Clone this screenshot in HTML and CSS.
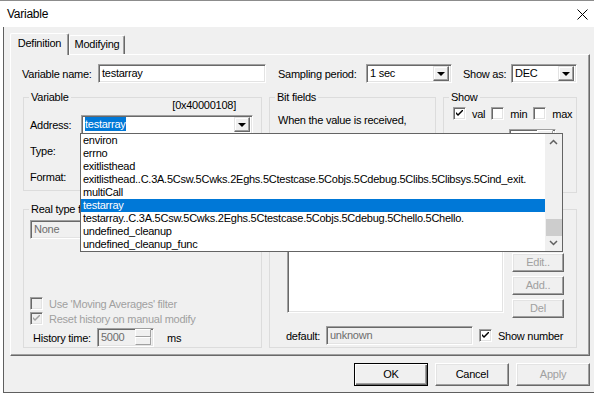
FILE: index.html
```html
<!DOCTYPE html>
<html lang="en">

<head>
    <meta charset="UTF-8">
    <meta name="viewport" content="width=device-width, initial-scale=1.0">
    <title>Variable</title>
    <link rel="stylesheet" href="styles.css">
</head>

<body>
    <div class="window">
        <div class="titlebar">
            <span class="titlebar__text">Variable</span>
            <svg class="titlebar__close" width="11" height="11" viewBox="0 0 11 11">
                <path d="M0.5 0.5 L10.5 10.5 M10.5 0.5 L0.5 10.5" stroke="#000" stroke-width="1" fill="none" />
            </svg>
        </div>
        <div class="client">
            <div class="tabs">
                <div class="tab tab--active">Definition</div>
                <div class="tab">Modifying</div>
            </div>
            <div class="panel">
                <div class="row">
                    <span class="lbl lbl--name">Variable name:</span>
                    <div class="edit edit--name">testarray</div>
                    <span class="lbl lbl--period">Sampling period:</span>
                    <div class="combo combo--period"><span class="combo__text">1 sec</span><span class="combo__btn"></span></div>
                    <span class="lbl lbl--showas">Show as:</span>
                    <div class="combo combo--showas"><span class="combo__text">DEC</span><span class="combo__btn"></span></div>
                </div>
                <div class="groups">
                    <div class="col col--left">
                        <fieldset class="group group--variable">
                            <legend>Variable</legend>
                            <div class="hex">[0x40000108]</div>
                            <div class="field">
                                <span class="field__lbl">Address:</span>
                                <div class="combo combo--addr"><span class="combo__text"><span class="sel">testarray</span></span><span class="combo__btn"></span></div>
                            </div>
                            <div class="field field--type">
                                <span class="field__lbl">Type:</span>
                                <div class="combo combo--addr"><span class="combo__text"></span><span class="combo__btn"></span></div>
                            </div>
                            <div class="field field--format">
                                <span class="field__lbl">Format:</span>
                                <div class="combo combo--addr"><span class="combo__text"></span><span class="combo__btn"></span></div>
                            </div>
                        </fieldset>
                        <fieldset class="group group--real">
                            <legend><span class="legend__clip">Real type filter</span></legend>
                            <div class="combo combo--none combo--off"><span class="combo__text">None</span><span class="combo__btn"></span></div>
                            <div class="check check--off check--first"><span class="check__box"></span>Use 'Moving Averages' filter</div>
                            <div class="check check--off"><span class="check__box"><svg width="7" height="7" viewBox="0 0 7 7"><path d="M0 2 L0 4 L2 6 L7 1 L7 -1 L2 4 Z" fill="#a0a0a0" /></svg></span>Reset history on manual modify</div>
                            <div class="history">
                                <span class="history__lbl">History time:</span>
                                <div class="spin spin--off"><span class="spin__text">5000</span><span class="spin__btns"><span class="spin__up"></span><span class="spin__down"></span></span></div>
                                <span class="history__unit">ms</span>
                            </div>
                        </fieldset>
                    </div>
                    <div class="col col--right">
                        <div class="top-groups">
                            <fieldset class="group group--bits">
                                <legend>Bit fields</legend>
                                <p class="bits__text">When the value is received,</p>
                            </fieldset>
                            <fieldset class="group group--show">
                                <legend>Show</legend>
                                <div class="show__checks">
                                    <div class="check"><span class="check__box"><svg width="7" height="7" viewBox="0 0 7 7"><path d="M0 2 L0 4 L2 6 L7 1 L7 -1 L2 4 Z" fill="#000" /></svg></span>val</div>
                                    <div class="check"><span class="check__box"></span>min</div>
                                    <div class="check"><span class="check__box"></span>max</div>
                                </div>
                                <div class="show__prec">
                                    <span class="prec__lbl">Precision:</span>
                                    <div class="spin spin--prec"><span class="spin__text"></span><span class="spin__btns"><span class="spin__up"></span><span class="spin__down"></span></span></div>
                                </div>
                            </fieldset>
                        </div>
                        <fieldset class="group group--values">
                            <legend></legend>
                            <div class="values__body">
                                <div class="listbox"></div>
                                <div class="values__btns">
                                    <div class="btn btn--small btn--off">Edit..</div>
                                    <div class="btn btn--small btn--off">Add..</div>
                                    <div class="btn btn--small btn--off">Del</div>
                                </div>
                            </div>
                            <div class="values__foot">
                                <span class="values__lbl">default:</span>
                                <div class="edit edit--default">unknown</div>
                                <div class="check check--shownum"><span class="check__box"><svg width="7" height="7" viewBox="0 0 7 7"><path d="M0 2 L0 4 L2 6 L7 1 L7 -1 L2 4 Z" fill="#000" /></svg></span>Show number</div>
                            </div>
                        </fieldset>
                    </div>
                </div>
            </div>
            <div class="buttons">
                <div class="btn btn--default">OK</div>
                <div class="btn">Cancel</div>
                <div class="btn btn--off">Apply</div>
            </div>
        </div>

        <div class="dropdown">
            <ul class="dropdown__list">
                <li>environ</li>
                <li>errno</li>
                <li>exitlisthead</li>
                <li>exitlisthead..C.3A.5Csw.5Cwks.2Eghs.5Ctestcase.5Cobjs.5Cdebug.5Clibs.5Clibsys.5Cind_exit.</li>
                <li>multiCall</li>
                <li class="active">testarray</li>
                <li>testarray..C.3A.5Csw.5Cwks.2Eghs.5Ctestcase.5Cobjs.5Cdebug.5Chello.5Chello.</li>
                <li>undefined_cleanup</li>
                <li>undefined_cleanup_func</li>
            </ul>
            <div class="scrollbar">
                <svg class="scrollbar__arrow" width="17" height="17" viewBox="0 0 17 17"><path d="M5 10 L8.5 6.5 L12 10" stroke="#606060" stroke-width="1.5" fill="none" /></svg>
                <div class="scrollbar__track"><div class="scrollbar__thumb"></div></div>
                <svg class="scrollbar__arrow" width="17" height="17" viewBox="0 0 17 17"><path d="M5 7 L8.5 10.5 L12 7" stroke="#606060" stroke-width="1.5" fill="none" /></svg>
            </div>
        </div>
    </div>
</body>

</html>
```

FILE: styles.css
```css
* {
    margin: 0;
    padding: 0;
    box-sizing: border-box;
}

body {
    font-family: "Liberation Sans", Arial, sans-serif;
    font-size: 11px;
    letter-spacing: -0.25px;
    color: #000;
    background-color: #f0f0f0;
}

.window {
    position: relative;
    width: 594px;
    height: 394px;
    overflow: hidden;
    background-color: #fff;
}

.titlebar {
    height: 27px;
    border-top: 1px solid #8c8c8c;
    display: flex;
    align-items: center;
    justify-content: space-between;
    padding: 0 6px 0 7px;
    background-color: #fff;
}

.titlebar__text {
    font-size: 12px;
}

.client {
    height: 366px;
    margin-left: 3px;
    border-left: 1px solid #5f5f5f;
    border-bottom: 1px solid #5f5f5f;
    background-color: #f0f0f0;
}

/* tabs */
.tabs {
    display: flex;
    align-items: flex-end;
    height: 27px;
    padding-top: 6px;
    padding-left: 6px;
}

.tab {
    width: 56px;
    height: 19px;
    text-align: center;
    line-height: 17px;
    border-top: 1px solid #fff;
    border-left: 1px solid #fff;
    border-right: 1px solid #696969;
    box-shadow: inset -1px 0 #a0a0a0;
    border-radius: 2px 2px 0 0;
    background-color: #f0f0f0;
}

.tab--active {
    position: relative;
    z-index: 1;
    width: 59px;
    height: 22px;
    margin-bottom: -1px;
    line-height: 19px;
}

.panel {
    width: 580px;
    height: 302px;
    margin-left: 6px;
    padding: 9px 11px 0 11px;
    border: 1px solid;
    border-color: #fff #696969 #696969 #fff;
    box-shadow: inset -1px -1px #a0a0a0;
}

/* generic controls */
.edit,
.combo,
.spin {
    height: 19px;
    background-color: #fff;
    border: 1px solid;
    border-color: #a0a0a0 #fff #fff #a0a0a0;
    box-shadow: inset 1px 1px #696969, inset -1px -1px #e3e3e3;
    line-height: 17px;
    padding-left: 3px;
    white-space: nowrap;
    overflow: hidden;
}

.combo {
    display: flex;
    justify-content: space-between;
    padding-right: 2px;
}

.combo__btn {
    position: relative;
    flex: none;
    width: 16px;
    height: 15px;
    margin-top: 1px;
    background-color: #f0f0f0;
    border: 1px solid;
    border-color: #e3e3e3 #696969 #696969 #e3e3e3;
    box-shadow: inset -1px -1px #a0a0a0, inset 1px 1px #fff;
}

.combo__btn::after {
    content: "";
    position: absolute;
    left: 3px;
    top: 5px;
    border-left: 4px solid transparent;
    border-right: 4px solid transparent;
    border-top: 4px solid #000;
}

.combo--off,
.spin--off {
    background-color: #f0f0f0;
    color: #6d6d6d;
}

.combo--off .combo__btn::after {
    border-top-color: #a0a0a0;
}

.sel {
    background-color: #0078d7;
    color: #fff;
    padding: 1px 0;
}

.lbl {
    white-space: nowrap;
}

.btn {
    height: 23px;
    width: 74px;
    text-align: center;
    line-height: 21px;
    border: 1px solid;
    border-color: #fff #696969 #696969 #fff;
    box-shadow: inset -1px -1px #a0a0a0, inset 1px 1px #e3e3e3;
    background-color: #f0f0f0;
}

.btn--default {
    border-color: #000;
    box-shadow: inset 1px 1px #fff, inset -1px -1px #696969, inset -2px -2px #a0a0a0;
}

.btn--off {
    color: #a0a0a0;
}

.btn--small {
    width: 52px;
    height: 19px;
    line-height: 17px;
}

/* checkboxes */
.check {
    display: flex;
    align-items: center;
    white-space: nowrap;
}

.check__box {
    display: flex;
    align-items: center;
    justify-content: center;
    width: 13px;
    height: 13px;
    margin-right: 6px;
    background-color: #fff;
    border: 1px solid;
    border-color: #a0a0a0 #fff #fff #a0a0a0;
    box-shadow: inset 1px 1px #696969, inset -1px -1px #e3e3e3;
}

.check--off {
    color: #a0a0a0;
}

.check--off .check__box {
    background-color: #f0f0f0;
}

/* row 1 */
.row {
    display: flex;
    align-items: center;
    height: 19px;
}

.lbl--name {
    width: 76px;
}

.edit--name {
    width: 168px;
}

.lbl--period {
    width: 88px;
    margin-left: 12px;
}

.combo--period {
    width: 86px;
}

.lbl--showas {
    width: 48px;
    margin-left: 11px;
}

.combo--showas {
    width: 66px;
}

/* groups */
.groups {
    display: flex;
    margin-top: 8px;
    margin-left: 1px;
}

.group {
    border: 1px solid #dcdcdc;
    padding: 0 6px;
    min-width: 0;
}

.group legend {
    padding: 0 2px;
    margin-left: -1px;
    line-height: 13px;
}

.legend__clip {
    display: block;
    max-width: 49px;
    overflow: hidden;
    white-space: nowrap;
}

.col {
    display: flex;
    flex-direction: column;
}

.col--left {
    width: 239px;
}

.col--right {
    width: 308px;
    margin-left: 7px;
}

.group--variable {
    height: 100px;
}

.hex {
    text-align: right;
    padding-right: 19px;
    line-height: 13px;
    margin-top: -5px;
}

.field {
    display: flex;
    align-items: center;
    height: 20px;
    margin-top: 3px;
}

.field__lbl {
    width: 51px;
}

.combo--addr {
    width: 172px;
    height: 20px;
}

.field--type,
.field--format {
    margin-top: 6px;
}

.group--real {
    height: 145px;
    margin-top: 12px;
}

.combo--none {
    width: 223px;
    margin-top: 4px;
}

.check--first {
    margin-top: 57px;
}

.group--real .check {
    height: 15px;
}

.history {
    display: flex;
    align-items: center;
    height: 19px;
    margin-top: 2px;
}

.history__lbl {
    width: 67px;
    padding-left: 3px;
}

.spin {
    display: flex;
    justify-content: space-between;
    padding-right: 2px;
}

.spin--off {
    width: 57px;
}

.spin__btns {
    display: flex;
    flex-direction: column;
    width: 16px;
}

.spin__up,
.spin__down {
    height: 8px;
    background-color: #f0f0f0;
    border: 1px solid;
    border-color: #fff #a0a0a0 #a0a0a0 #fff;
}

.history__unit {
    margin-left: 13px;
}

.top-groups {
    display: flex;
    justify-content: space-between;
}

.group--bits {
    width: 167px;
    height: 102px;
}

.bits__text {
    margin-top: 10px;
    padding-left: 2px;
    line-height: 13px;
    white-space: nowrap;
}

.group--show {
    width: 134px;
    height: 102px;
}

.show__checks {
    display: flex;
    margin-top: 3px;
    padding-left: 3px;
}

.show__checks .check {
    margin-right: 6px;
}

.show__prec {
    display: flex;
    align-items: center;
    margin-top: 9px;
    padding-left: 3px;
}

.prec__lbl {
    width: 56px;
}

.spin--prec {
    width: 47px;
}

.group--values {
    height: 145px;
    margin-top: 10px;
}

.group--values legend {
    height: 13px;
}

.values__body {
    display: flex;
    padding-left: 11px;
    margin-top: 6px;
}

.listbox {
    width: 217px;
    height: 91px;
    background-color: #fff;
    border: 1px solid;
    border-color: #a0a0a0 #fff #fff #a0a0a0;
    box-shadow: inset 1px 1px #696969, inset -1px -1px #e3e3e3;
}

.values__btns {
    display: flex;
    flex-direction: column;
    gap: 4px;
    margin-left: 8px;
    padding-top: 31px;
}

.values__foot {
    display: flex;
    align-items: center;
    margin-top: 8px;
    padding-left: 10px;
}

.values__lbl {
    width: 40px;
}

.edit--default {
    width: 147px;
    background-color: #f0f0f0;
    color: #6d6d6d;
}

.check--shownum {
    margin-left: 6px;
}

/* bottom buttons */
.buttons {
    display: flex;
    justify-content: flex-end;
    gap: 7px;
    margin-top: 7px;
    padding-right: 4px;
}

/* dropdown list of the address combo */
.dropdown {
    position: absolute;
    left: 80px;
    top: 133px;
    width: 483px;
    height: 119px;
    display: flex;
    background-color: #fff;
    border: 1px solid #646464;
}

.dropdown__list {
    flex: 1;
    list-style: none;
}

.dropdown__list li {
    height: 13px;
    line-height: 13px;
    padding-left: 2px;
    white-space: nowrap;
}

.dropdown__list li.active {
    background-color: #0078d7;
    color: #fff;
}

.scrollbar {
    width: 17px;
    display: flex;
    flex-direction: column;
    background-color: #f0f0f0;
}

.scrollbar__track {
    flex: 1;
    position: relative;
}

.scrollbar__thumb {
    position: absolute;
    left: 1px;
    right: 0;
    top: 68px;
    height: 17px;
    background-color: #cdcdcd;
}
```
